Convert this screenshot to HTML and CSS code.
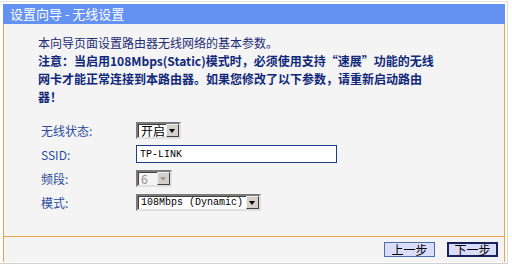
FILE: index.html
```html
<!DOCTYPE html>
<html lang="zh-CN">
<head>
    <meta charset="UTF-8">
    <title>设置向导 - 无线设置</title>
    <link rel="stylesheet" href="styles.css">
</head>
<body>

<div class="frame">
    <div class="top-strip"></div>

    <div class="wizard">
        <!-- Title bar -->
        <div class="title-bar">设置向导 - 无线设置</div>

        <!-- Main panel -->
        <div class="panel">
            <p class="intro">本向导页面设置路由器无线网络的基本参数。<br>
                <b>注意：当启用108Mbps(Static)模式时，必须使用支持“速展”功能的无线<br>网卡才能正常连接到本路由器。如果您修改了以下参数，请重新启动路由<br>器！</b>
            </p>

            <div class="form">
                <div class="row">
                    <label class="label">无线状态:</label>
                    <span class="select">
                        <span class="select-text">开启</span>
                        <span class="arrow"></span>
                    </span>
                </div>
                <div class="row">
                    <label class="label">SSID:</label>
                    <input class="text-input" type="text" value="TP-LINK">
                </div>
                <div class="row">
                    <label class="label">频段:</label>
                    <span class="select disabled">
                        <span class="select-text">6</span>
                        <span class="arrow"></span>
                    </span>
                </div>
                <div class="row">
                    <label class="label">模式:</label>
                    <span class="select mode">
                        <span class="select-text mono">108Mbps (Dynamic)</span>
                        <span class="arrow"></span>
                    </span>
                </div>
            </div>
        </div>

        <!-- Buttons -->
        <div class="footer">
            <button class="btn" type="button">上一步</button>
            <button class="btn btn-default" type="button">下一步</button>
        </div>
    </div>
</div>

</body>
</html>
```

FILE: styles.css
```css
body {
    margin: 0;
    padding: 0;
    background: #fff;
    font-family: "Noto Sans CJK SC", "DejaVu Sans", sans-serif;
    font-size: 12px;
}

.frame {
    width: 507px;
    height: 262px;
    border-right: 1px solid #dcdcdc;
    border-bottom: 1px solid #d0d0d0;
}

.top-strip {
    height: 1px;
    margin-top: 1px;
    margin-bottom: 2px;
    background: #e2e2e2;
}

/* Wizard box */
.wizard {
    margin-left: 3px;
    width: 502px;
}

.title-bar {
    height: 20px;
    line-height: 20px;
    background: #6492f2;
    color: #fff;
    padding-left: 7px;
    font-size: 13px;
}

.panel {
    height: 202px;
    padding-top: 10px;
    background: #f4f4f4;
    border-left: 1px solid #f0a24c;
    border-right: 1px solid #f0a24c;
    border-bottom: 1px solid #f0a24c;
}

.intro {
    margin: 0 0 0 34px;
    line-height: 18px;
    color: #1c2c74;
}

.intro b {
    color: #10287a;
}

/* Form rows */
.form {
    margin-top: 12px;
    margin-left: 37px;
}

.row {
    display: flex;
    align-items: center;
    height: 24px;
}

.label {
    width: 95px;
    color: #2a4c9e;
}

.select {
    display: flex;
    align-items: center;
    height: 13px;
    width: 41px;
    background: #fff;
    border: 2px solid;
    border-color: #7a7a7a #e0e0e0 #e0e0e0 #7a7a7a;
    box-shadow: inset 1px 1px 0 #404040;
}

.select-text {
    flex: 1;
    padding-left: 3px;
    line-height: 13px;
    color: #000;
}

.select .arrow {
    position: relative;
    width: 13px;
    height: 13px;
    background: #d4d0c8;
    box-sizing: border-box;
    border: 1px solid;
    border-color: #f0f0f0 #404040 #404040 #f0f0f0;
}

/* small triangle inside the arrow button */
.select .arrow::after {
    content: "";
    position: absolute;
    left: 2px;
    top: 4px;
    border-left: 3.5px solid transparent;
    border-right: 3.5px solid transparent;
    border-top: 4px solid #000;
}

.select.disabled {
    width: 32px;
    background: #f4f4f4;
}

.select.disabled .select-text {
    color: #909090;
}

.select.disabled .arrow::after {
    border-top-color: #9a9a9a;
}

.select.mode {
    width: 121px;
}

.mono {
    font-family: "Liberation Mono", monospace;
    font-size: 10px;
}

.text-input {
    width: 201px;
    height: 18px;
    box-sizing: border-box;
    border: 1px solid #1e3c8c;
    padding: 0 3px;
    font-family: "Liberation Mono", monospace;
    font-size: 10px;
    color: #000;
    background: #fff;
    outline: none;
}

/* Footer with buttons */
.footer {
    height: 25px;
    background: #f4f4f4;
    border-left: 1px solid #f0a24c;
    border-right: 1px solid #f0a24c;
    display: flex;
    justify-content: flex-end;
    align-items: flex-start;
    gap: 12px;
    padding-right: 6px;
}

.btn {
    margin-top: 5px;
    width: 51px;
    height: 15px;
    padding: 0;
    box-sizing: border-box;
    border: 1px solid #4d6cb0;
    background: #dadcfa;
    color: #000;
    font-family: "Noto Sans CJK SC", sans-serif;
    font-size: 12px;
    line-height: 12px;
}

.btn-default {
    border: 2px solid #18235c;
}
```
